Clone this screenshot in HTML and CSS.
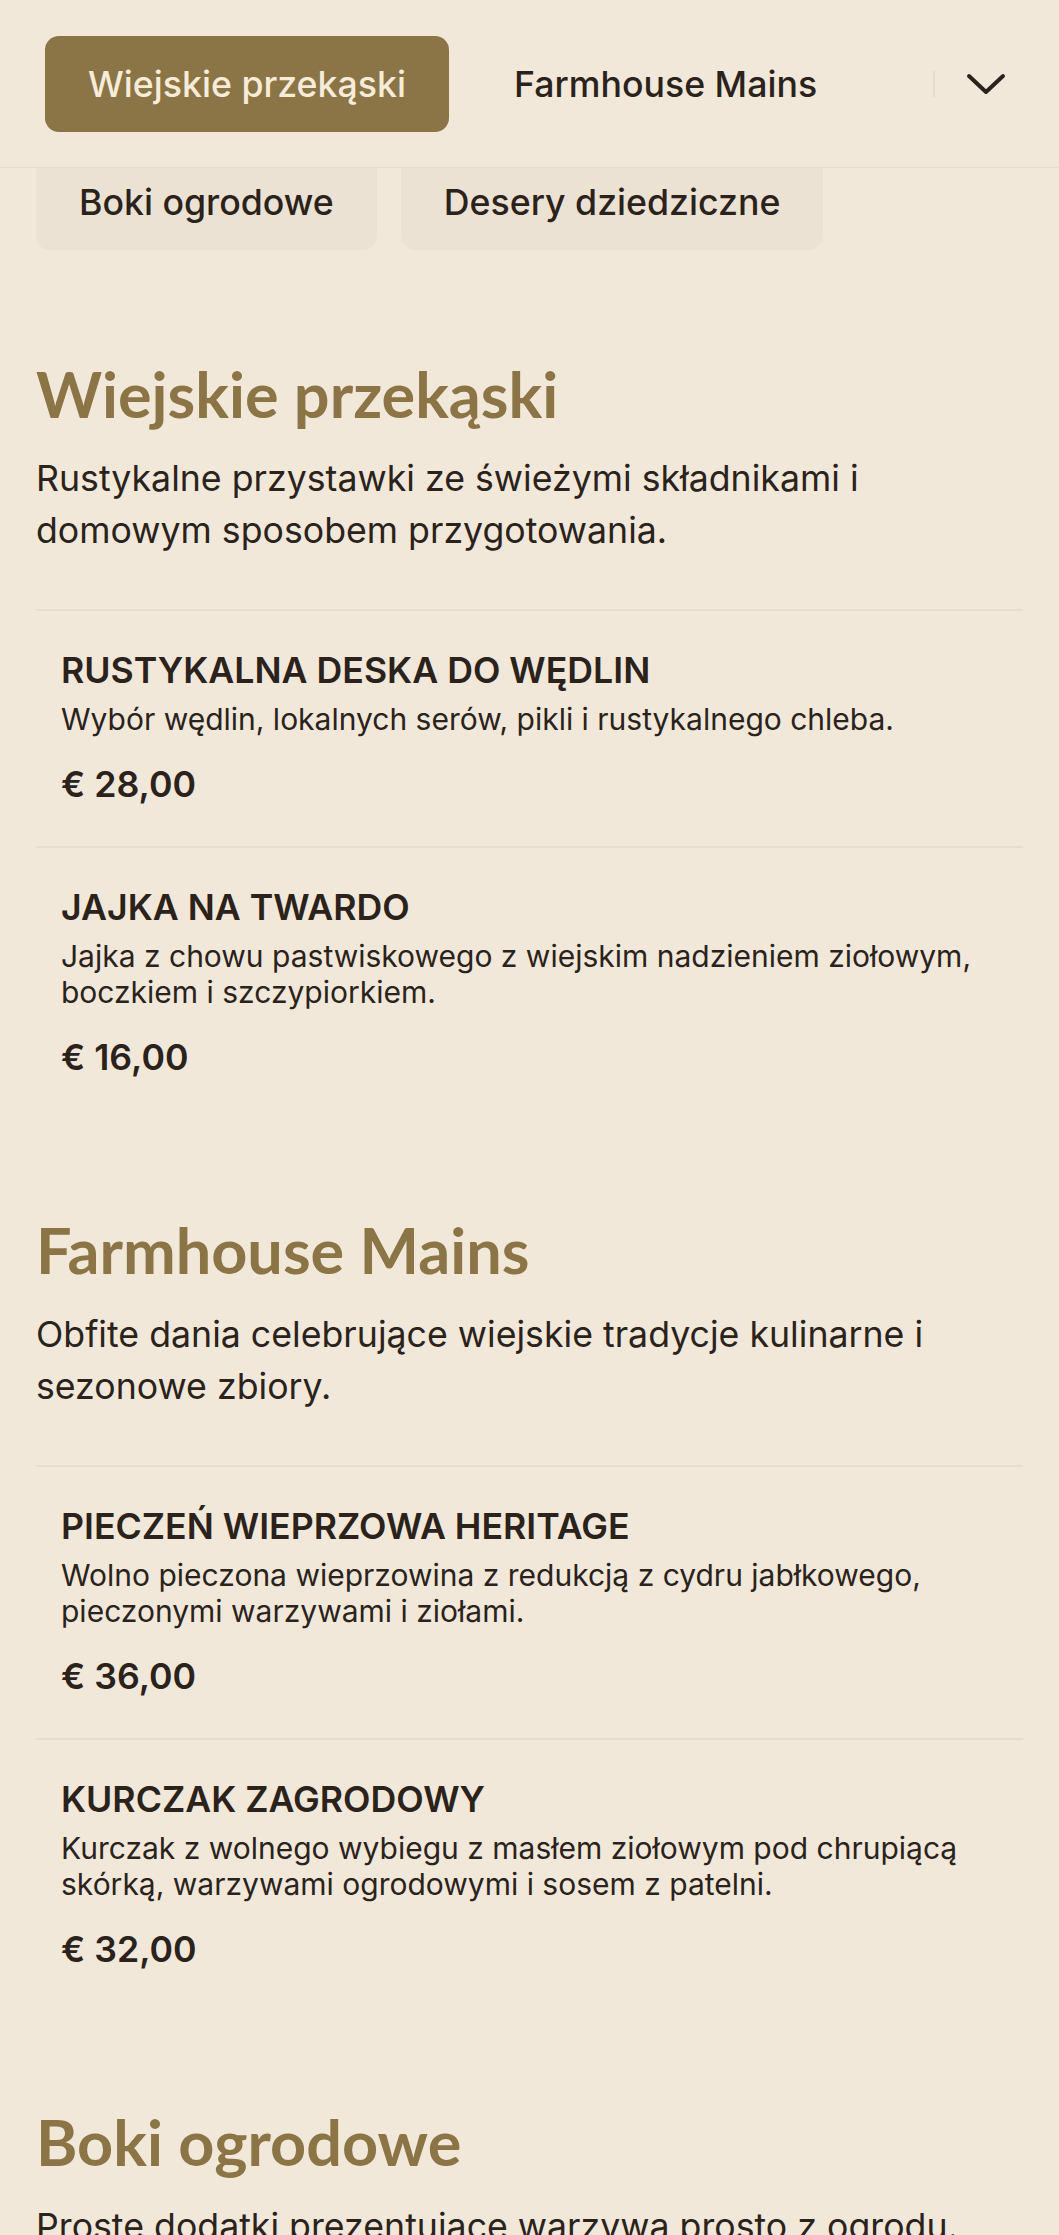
FILE: index.html
```html
<!DOCTYPE html>
<html lang="pl">
<head>
<meta charset="utf-8">
<title>Menu</title>
<link rel="stylesheet" href="styles.css">
</head>
<body>
<header class="topbar">
  <nav class="tabs">
    <a class="tab active">Wiejskie przekąski</a>
    <a class="tab">Farmhouse Mains</a>
  </nav>
  <span class="sep"></span>
  <button class="more" aria-label="Więcej">
    <svg width="40" height="24" viewBox="0 0 40 24"><polyline points="3,4 20,20 37,4" fill="none" stroke="#2b231b" stroke-width="4" stroke-linecap="round" stroke-linejoin="round"/></svg>
  </button>
</header>

<div class="chips">
  <span class="chip">Boki ogrodowe</span>
  <span class="chip">Desery dziedziczne</span>
</div>

<main class="menu">
  <section class="section">
    <h2 class="section-title">Wiejskie przekąski</h2>
    <p class="section-desc">Rustykalne przystawki ze świeżymi składnikami i domowym sposobem przygotowania.</p>
    <div class="items">
      <article class="item">
        <h3 class="item-name">RUSTYKALNA DESKA DO WĘDLIN</h3>
        <p class="item-desc">Wybór wędlin, lokalnych serów, pikli i rustykalnego chleba.</p>
        <div class="item-price">€ 28,00</div>
      </article>
      <article class="item">
        <h3 class="item-name">JAJKA NA TWARDO</h3>
        <p class="item-desc">Jajka z chowu pastwiskowego z wiejskim nadzieniem ziołowym, boczkiem i szczypiorkiem.</p>
        <div class="item-price">€ 16,00</div>
      </article>
    </div>
  </section>

  <section class="section">
    <h2 class="section-title">Farmhouse Mains</h2>
    <p class="section-desc">Obfite dania celebrujące wiejskie tradycje kulinarne i sezonowe zbiory.</p>
    <div class="items">
      <article class="item">
        <h3 class="item-name">PIECZEŃ WIEPRZOWA HERITAGE</h3>
        <p class="item-desc">Wolno pieczona wieprzowina z redukcją z cydru jabłkowego, pieczonymi warzywami i ziołami.</p>
        <div class="item-price">€ 36,00</div>
      </article>
      <article class="item">
        <h3 class="item-name">KURCZAK ZAGRODOWY</h3>
        <p class="item-desc">Kurczak z wolnego wybiegu z masłem ziołowym pod chrupiącą skórką, warzywami ogrodowymi i sosem z patelni.</p>
        <div class="item-price">€ 32,00</div>
      </article>
    </div>
  </section>

  <section class="section">
    <h2 class="section-title">Boki ogrodowe</h2>
    <p class="section-desc">Proste dodatki prezentujące warzywa prosto z ogrodu.</p>
  </section>
</main>
</body>
</html>
```

FILE: styles.css
```css
* { box-sizing: border-box; }

html, body {
  margin: 0;
  padding: 0;
  background: #f1e8da;
  color: #2b231b;
  font-family: "Inter", "Liberation Sans", sans-serif;
}

.topbar {
  position: sticky;
  top: 0;
  z-index: 2;
  display: flex;
  align-items: center;
  padding: 36px 45px 35px 45px;
  background: #f1e8da;
  border-bottom: 1px solid #e6ddcd;
}

.tabs {
  flex: 1;
  display: flex;
  gap: 22px;
  overflow: hidden;
  min-width: 0;
}

.tab {
  flex-shrink: 0;
  white-space: nowrap;
  padding: 21px 43px;
  font-size: 35.7px;
  line-height: 54px;
  font-weight: 500;
  border-radius: 14px;
  color: #2b231b;
}

.tab.active {
  background: #8b7546;
  color: #f6ecd9;
}

.sep {
  width: 2px;
  height: 26px;
  margin-left: 18px;
  background: #e5dbca;
}

.more {
  width: 56px;
  height: 44px;
  margin-left: 23px;
  padding: 0;
  border: 0;
  background: none;
  display: flex;
  align-items: center;
  justify-content: center;
}

.chips {
  display: flex;
  gap: 24px;
  margin: -14px 0 13px;
  padding: 0 36px;
}

.chip {
  padding: 21px 43px;
  font-size: 35.7px;
  line-height: 54px;
  font-weight: 500;
  border-radius: 14px;
  background: #ebe2d3;
  white-space: nowrap;
}

.menu {
  padding: 0 36px;
}

.section {
  padding-top: 92px;
}

.section-title {
  margin: 0;
  font-family: "Lato", sans-serif;
  font-weight: 700;
  font-size: 63px;
  line-height: 78px;
  color: #8b7546;
}

.section-desc {
  margin: 19px 0 0;
  font-size: 35.7px;
  line-height: 52px;
}

.items {
  margin-top: 53px;
}

.item {
  border-top: 2px solid #e8dece;
  padding: 36px 25px 39px;
}

.item-name {
  margin: 0;
  font-size: 35.7px;
  line-height: 46px;
  font-weight: 600;
}

.item-desc {
  margin: 8px 0 0;
  font-size: 30px;
  line-height: 36px;
}

.item-price {
  margin-top: 24px;
  font-size: 35.7px;
  line-height: 46px;
  font-weight: 600;
}
```
